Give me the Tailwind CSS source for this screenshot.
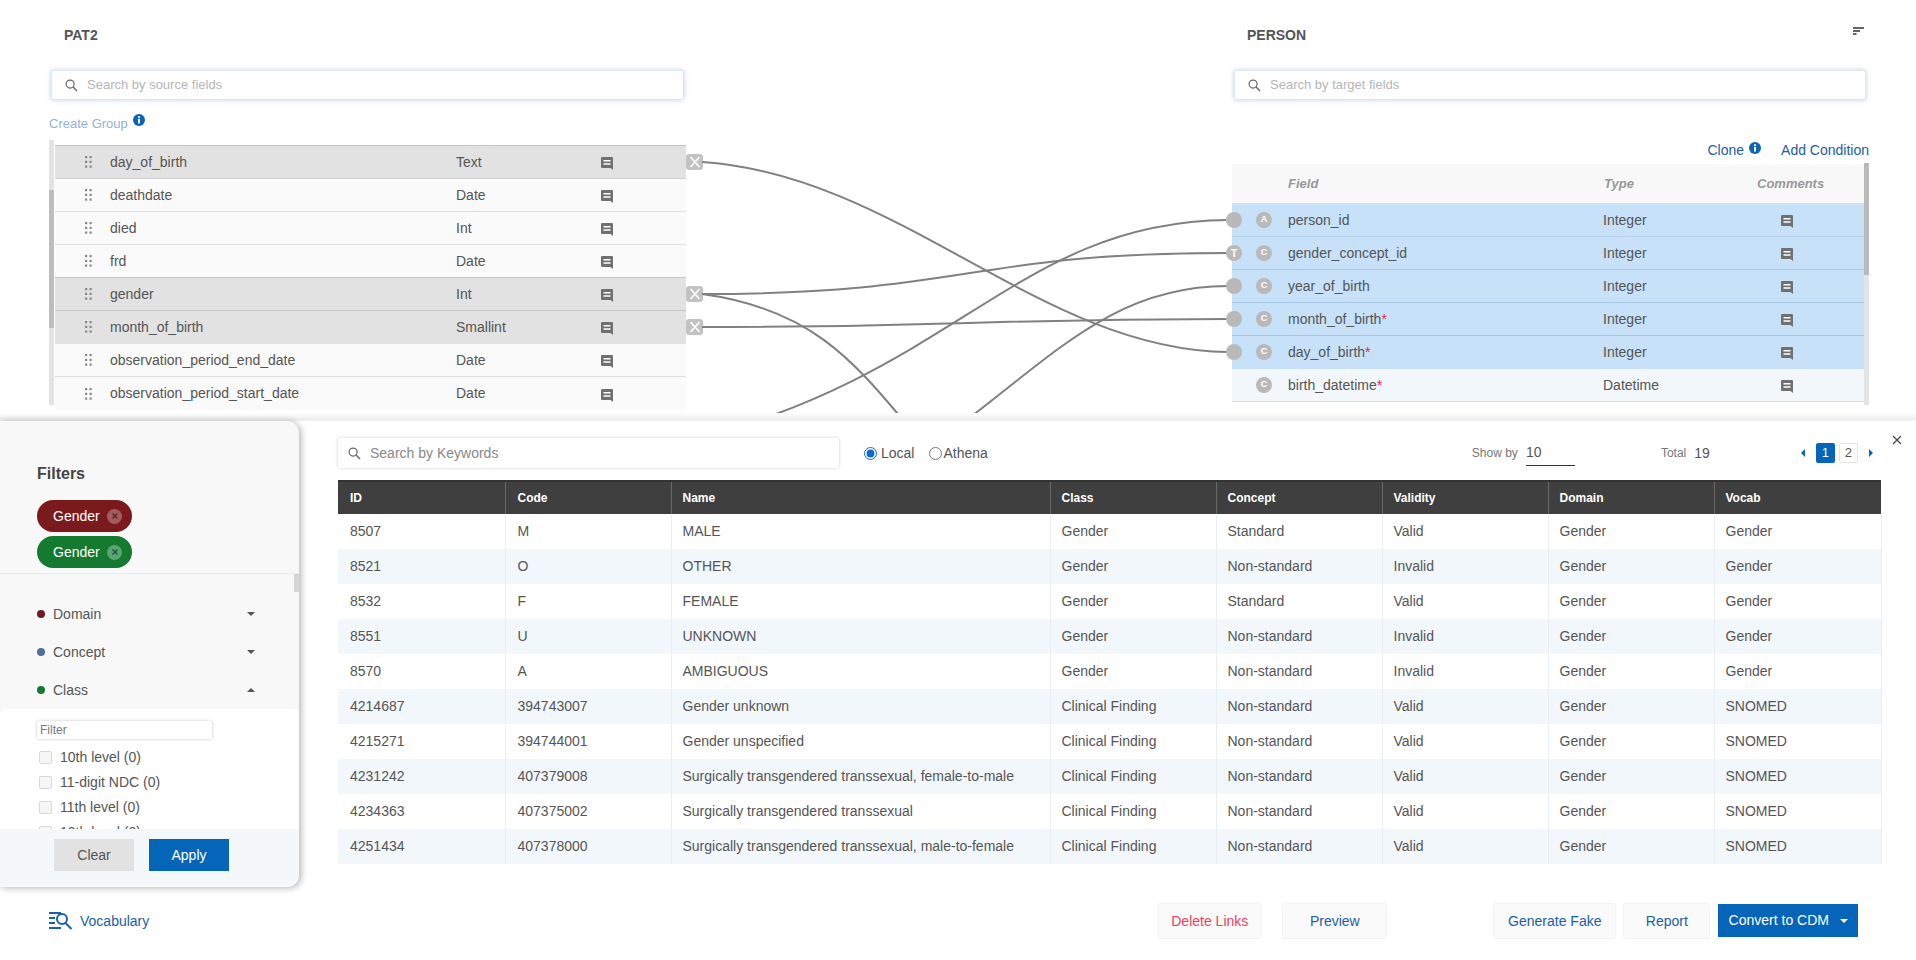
<!DOCTYPE html>
<html lang="en">
<head>
  <meta charset="UTF-8">
  <title>Mapping</title>
  <script src="https://cdn.jsdelivr.net/npm/@tailwindcss/browser@4"></script>
</head>
<body class="bg-white font-['Liberation_Sans',Arial,sans-serif] text-[14px] text-[#555]">
  <svg class="hidden">
    <symbol id="comment" viewBox="0 0 12 13"><path d="M1 0h10a1 1 0 0 1 1 1V13l-2.500-2H1a1 1 0 0 1-1-1V1a1 1 0 0 1 1-1z" fill="#707070"/><path d="M2.500 3.700h7M2.500 7h7" stroke="#fff" stroke-width="1.400"/></symbol>
    <symbol id="drag" viewBox="0 0 7 14"><g fill="#888"><rect x="0" y="1" width="2.200" height="2.200"/><rect x="4.500" y="1" width="2.200" height="2.200"/><rect x="0" y="5.800" width="2.200" height="2.200"/><rect x="4.500" y="5.800" width="2.200" height="2.200"/><rect x="0" y="10.500" width="2.200" height="2.200"/><rect x="4.500" y="10.500" width="2.200" height="2.200"/></g></symbol>
    <symbol id="search" viewBox="0 0 14 14"><circle cx="5.500" cy="5.500" r="4.300" fill="none" stroke="#666" stroke-width="1.300"/><path d="M8.700 8.700L13 13" stroke="#666" stroke-width="1.500"/></symbol>
    <symbol id="info" viewBox="0 0 12 12"><circle cx="6" cy="6" r="6" fill="#0b64b4"/><rect x="5" y="5" width="2" height="4.500" fill="#fff"/><rect x="5" y="2.300" width="2" height="1.800" fill="#fff"/></symbol>
    <symbol id="cross" viewBox="0 0 12 12"><path d="M1.500 1l9 10M10.500 1l-9 10" stroke="#fff" stroke-width="1.600"/></symbol>
    <symbol id="chipx" viewBox="0 0 8 8"><path d="M1.500 1.500l5 5M6.500 1.500l-5 5" stroke="#000" stroke-opacity="0.55" stroke-width="1.300"/></symbol>
  </svg>

  <div class="w-[1916px] h-[960px] overflow-hidden flex flex-col">
    <!-- Mapping area -->
    <section class="relative h-[420px] overflow-hidden flex justify-between">
      <div class="w-[703px] pl-[49px] shrink-0">
        <h2 class="pl-[15px] pt-[27px] h-[70px] text-[14px] font-bold text-[#555] leading-[16px]">PAT2</h2>
        <div class="ml-[2px] w-[633px] h-[30px] flex items-center gap-[9px] pl-[13px] bg-white rounded-[2px] border border-[#dfe8ef] shadow-[0_0_5px_rgba(110,150,190,0.45)]">
          <svg class="w-[13px] h-[13px]"><use href="#search"/></svg>
          <span class="text-[13px] text-[#b5b5b5]">Search by source fields</span>
        </div>
        <div class="h-[45px] pt-[15px] flex items-start text-[13px] leading-[18px] text-[#8fb3d1]">Create Group<svg class="w-[12px] h-[12px] ml-[5px] mt-[-1px]"><use href="#info"/></svg></div>
        <div class="relative">
          <div class="absolute left-0 top-[-5px] w-[5px] h-[265px] bg-[#e3e3e3]"><div class="mt-[50px] h-[138px] bg-[#bdbdbd]"></div></div>
          <div class="ml-[6px] w-[631px] border-t border-[#c4c4c4]">
            <div class="relative h-[33px] pl-[30px] flex items-center bg-[#e2e2e2] border-b border-[#d2d2d2]"><svg class="w-[7px] h-[14px] mr-[18px]"><use href="#drag"/></svg><span class="w-[346px]">day_of_birth</span><span class="w-[145px]">Text</span><svg class="w-[12px] h-[13px] mt-[3px]"><use href="#comment"/></svg><span class="absolute right-[-17px] top-[8px] w-[17px] h-[16px] rounded-[3px] bg-[#c2c2c2] flex items-center justify-center"><svg class="w-[12px] h-[12px]"><use href="#cross"/></svg></span></div>
            <div class="h-[33px] pl-[30px] flex items-center bg-[#fafafa] border-b border-[#dedede]"><svg class="w-[7px] h-[14px] mr-[18px]"><use href="#drag"/></svg><span class="w-[346px]">deathdate</span><span class="w-[145px]">Date</span><svg class="w-[12px] h-[13px] mt-[3px]"><use href="#comment"/></svg></div>
            <div class="h-[33px] pl-[30px] flex items-center bg-[#fafafa] border-b border-[#dedede]"><svg class="w-[7px] h-[14px] mr-[18px]"><use href="#drag"/></svg><span class="w-[346px]">died</span><span class="w-[145px]">Int</span><svg class="w-[12px] h-[13px] mt-[3px]"><use href="#comment"/></svg></div>
            <div class="h-[33px] pl-[30px] flex items-center bg-[#fafafa] border-b border-[#c4c4c4]"><svg class="w-[7px] h-[14px] mr-[18px]"><use href="#drag"/></svg><span class="w-[346px]">frd</span><span class="w-[145px]">Date</span><svg class="w-[12px] h-[13px] mt-[3px]"><use href="#comment"/></svg></div>
            <div class="relative h-[33px] pl-[30px] flex items-center bg-[#e2e2e2] border-b border-[#c8c8c8]"><svg class="w-[7px] h-[14px] mr-[18px]"><use href="#drag"/></svg><span class="w-[346px]">gender</span><span class="w-[145px]">Int</span><svg class="w-[12px] h-[13px] mt-[3px]"><use href="#comment"/></svg><span class="absolute right-[-17px] top-[8px] w-[17px] h-[16px] rounded-[3px] bg-[#c2c2c2] flex items-center justify-center"><svg class="w-[12px] h-[12px]"><use href="#cross"/></svg></span></div>
            <div class="relative h-[33px] pl-[30px] flex items-center bg-[#e2e2e2] border-b border-[#e2e2e2]"><svg class="w-[7px] h-[14px] mr-[18px]"><use href="#drag"/></svg><span class="w-[346px]">month_of_birth</span><span class="w-[145px]">Smallint</span><svg class="w-[12px] h-[13px] mt-[3px]"><use href="#comment"/></svg><span class="absolute right-[-17px] top-[8px] w-[17px] h-[16px] rounded-[3px] bg-[#c2c2c2] flex items-center justify-center"><svg class="w-[12px] h-[12px]"><use href="#cross"/></svg></span></div>
            <div class="h-[33px] pl-[30px] flex items-center bg-[#fafafa] border-b border-[#dedede]"><svg class="w-[7px] h-[14px] mr-[18px]"><use href="#drag"/></svg><span class="w-[346px]">observation_period_end_date</span><span class="w-[145px]">Date</span><svg class="w-[12px] h-[13px] mt-[3px]"><use href="#comment"/></svg></div>
            <div class="h-[33px] pl-[30px] flex items-center bg-[#fafafa]"><svg class="w-[7px] h-[14px] mr-[18px]"><use href="#drag"/></svg><span class="w-[346px]">observation_period_start_date</span><span class="w-[145px]">Date</span><svg class="w-[12px] h-[13px] mt-[3px]"><use href="#comment"/></svg></div>
          </div>
        </div>
      </div>

      <div class="w-[684px] pr-[47px] shrink-0">
        <div class="h-[70px] pl-[15px] pt-[27px] pr-[5px] flex justify-between items-start">
          <h2 class="text-[14px] font-bold text-[#555] leading-[16px]">PERSON</h2>
          <svg class="w-[11px] h-[8px]" viewBox="0 0 11 8"><path d="M0 1h11M0 4h7M0 7h3.500" stroke="#333" stroke-width="1.600"/></svg>
        </div>
        <div class="ml-[2px] w-[632px] h-[30px] flex items-center gap-[9px] pl-[13px] bg-white rounded-[2px] border border-[#dfe8ef] shadow-[0_0_5px_rgba(110,150,190,0.45)]">
          <svg class="w-[13px] h-[13px]"><use href="#search"/></svg>
          <span class="text-[13px] text-[#b5b5b5]">Search by target fields</span>
        </div>
        <div class="h-[64px] flex items-end justify-end pb-[5px] gap-[20px] text-[14px] leading-[18px] text-[#1a60a8]">
          <span class="flex items-start">Clone<svg class="w-[12px] h-[12px] ml-[5px] mt-[1px]"><use href="#info"/></svg></span>
          <span>Add Condition</span>
        </div>
        <div class="relative w-[637px]">
          <div class="absolute right-0 top-[-1px] w-[5px] h-[242px] bg-[#e3e3e3]"><div class="h-[112px] bg-[#b9b9b9]"></div></div>
          <div class="w-[632px] h-[40px] pl-[56px] flex items-center bg-[#f8f8f8] border-b border-[#dcdcdc] text-[13px] italic font-bold text-[#999]"><span class="w-[316px]">Field</span><span class="w-[153px]">Type</span><span>Comments</span></div>
          <div class="w-[632px] h-[33px] flex items-center bg-[#c6e1f8] border-b border-[#b7d2ea]"><span class="w-[16px] h-[16px] ml-[24px] mr-[16px] rounded-full bg-[#b9b9b9] text-white text-[9px] font-bold flex items-center justify-center">A</span><span class="w-[315px]">person_id</span><span class="w-[178px]">Integer</span><svg class="w-[12px] h-[13px] mt-[3px]"><use href="#comment"/></svg></div>
          <div class="w-[632px] h-[33px] flex items-center bg-[#c6e1f8] border-b border-[#a9c8e3]"><span class="w-[16px] h-[16px] ml-[24px] mr-[16px] rounded-full bg-[#b9b9b9] text-white text-[9px] font-bold flex items-center justify-center">C</span><span class="w-[315px]">gender_concept_id</span><span class="w-[178px]">Integer</span><svg class="w-[12px] h-[13px] mt-[3px]"><use href="#comment"/></svg></div>
          <div class="w-[632px] h-[33px] flex items-center bg-[#c6e1f8] border-b border-[#a9c8e3]"><span class="w-[16px] h-[16px] ml-[24px] mr-[16px] rounded-full bg-[#b9b9b9] text-white text-[9px] font-bold flex items-center justify-center">C</span><span class="w-[315px]">year_of_birth</span><span class="w-[178px]">Integer</span><svg class="w-[12px] h-[13px] mt-[3px]"><use href="#comment"/></svg></div>
          <div class="w-[632px] h-[33px] flex items-center bg-[#c6e1f8] border-b border-[#a9c8e3]"><span class="w-[16px] h-[16px] ml-[24px] mr-[16px] rounded-full bg-[#b9b9b9] text-white text-[9px] font-bold flex items-center justify-center">C</span><span class="w-[315px]">month_of_birth<span class="text-[#e0245e]">*</span></span><span class="w-[178px]">Integer</span><svg class="w-[12px] h-[13px] mt-[3px]"><use href="#comment"/></svg></div>
          <div class="w-[632px] h-[33px] flex items-center bg-[#c6e1f8] border-b border-[#c6e1f8]"><span class="w-[16px] h-[16px] ml-[24px] mr-[16px] rounded-full bg-[#b9b9b9] text-white text-[9px] font-bold flex items-center justify-center">C</span><span class="w-[315px]">day_of_birth<span class="text-[#e0245e]">*</span></span><span class="w-[178px]">Integer</span><svg class="w-[12px] h-[13px] mt-[3px]"><use href="#comment"/></svg></div>
          <div class="w-[632px] h-[33px] flex items-center bg-[#f2f7fb] border-b border-[#d5dde3]"><span class="w-[16px] h-[16px] ml-[24px] mr-[16px] rounded-full bg-[#b9b9b9] text-white text-[9px] font-bold flex items-center justify-center">C</span><span class="w-[315px]">birth_datetime<span class="text-[#e0245e]">*</span></span><span class="w-[178px]">Datetime</span><svg class="w-[12px] h-[13px] mt-[3px]"><use href="#comment"/></svg></div>
        </div>
      </div>

      <!-- Links between source and target fields -->
      <svg class="absolute left-0 top-0 pointer-events-none" width="1916" height="415" fill="none" stroke="#808080" stroke-width="2">
        <path d="M702 162C900 175 1040 350 1228 352"/>
        <path d="M702 294C968 294 968 253 1228 253"/>
        <path d="M702 294C820 310 860 370 920 440"/>
        <path d="M702 327C968 327 968 319 1228 319"/>
        <path d="M700 438C960 370 1020 222 1228 220"/>
        <path d="M940 440C1050 360 1110 286 1228 286"/>
      </svg>
      <div class="absolute left-[1226px] top-[212px] w-[16px] h-[16px] rounded-full bg-[#b9b9b9]"></div>
      <div class="absolute left-[1226px] top-[245px] w-[16px] h-[16px] rounded-full bg-[#b9b9b9] text-white text-[11px] font-bold flex items-center justify-center">T</div>
      <div class="absolute left-[1226px] top-[278px] w-[16px] h-[16px] rounded-full bg-[#b9b9b9]"></div>
      <div class="absolute left-[1226px] top-[311px] w-[16px] h-[16px] rounded-full bg-[#b9b9b9]"></div>
      <div class="absolute left-[1226px] top-[344px] w-[16px] h-[16px] rounded-full bg-[#b9b9b9]"></div>
      <div class="absolute left-0 bottom-0 w-full h-[7px] bg-gradient-to-b from-white to-[#ececec]"></div>
    </section>

    <!-- Vocabulary drawer -->
    <section class="h-[470px] flex bg-white border-t border-[#f0f0f0]">
      <aside class="w-[299px] h-[466px] shrink-0 flex flex-col bg-[#f8f8f9] rounded-r-[12px] shadow-[2px_1px_7px_rgba(0,0,0,0.3)] overflow-hidden relative z-10">
        <div class="h-[153px] pl-[37px] pt-[44px] border-b border-[#ececec] shrink-0">
          <h3 class="text-[16px] font-bold leading-[18px] text-[#444] mb-[17px]">Filters</h3>
          <div class="w-[95px] h-[32px] mb-[4px] rounded-full bg-[#7b1a1c] text-white flex items-center justify-between pl-[16px] pr-[10px]">Gender<span class="w-[15px] h-[15px] rounded-full bg-[#a55a5c] flex items-center justify-center"><svg class="w-[8px] h-[8px]"><use href="#chipx"/></svg></span></div>
          <div class="w-[95px] h-[32px] rounded-full bg-[#137a30] text-white flex items-center justify-between pl-[16px] pr-[10px]">Gender<span class="w-[15px] h-[15px] rounded-full bg-[#5aa673] flex items-center justify-center"><svg class="w-[8px] h-[8px]"><use href="#chipx"/></svg></span></div>
        </div>
        <div class="relative h-[135px] shrink-0 pl-[37px] pr-[44px] pt-[21px]">
          <div class="absolute right-0 top-0 w-[5px] h-[18px] bg-[#d5d5d5]"></div>
          <div class="h-[38px] flex items-center"><span class="w-[8px] h-[8px] rounded-full bg-[#701a24] mr-[8px]"></span><span>Domain</span><span class="ml-auto border-x-[4px] border-x-transparent border-t-[4px] border-t-[#555]"></span></div>
          <div class="h-[38px] flex items-center"><span class="w-[8px] h-[8px] rounded-full bg-[#4f6f9a] mr-[8px]"></span><span>Concept</span><span class="ml-auto border-x-[4px] border-x-transparent border-t-[4px] border-t-[#555]"></span></div>
          <div class="h-[38px] flex items-center"><span class="w-[8px] h-[8px] rounded-full bg-[#137a30] mr-[8px]"></span><span>Class</span><span class="ml-auto border-x-[4px] border-x-transparent border-b-[4px] border-b-[#555]"></span></div>
        </div>
        <div class="h-[120px] shrink-0 overflow-hidden bg-white pl-[37px] pt-[12px] rounded-t-[6px]">
          <div class="w-[175px] h-[18px] pl-[3px] mb-[6px] flex items-center text-[12px] text-[#777] bg-white rounded-[2px] shadow-[0_0_3px_rgba(0,0,0,0.25)]">Filter</div>
          <div class="h-[25px] flex items-center"><span class="w-[13px] h-[13px] ml-[2px] mr-[8px] rounded-[2px] border border-[#d8d8d8] bg-[#f6f6f6]"></span>10th level (0)</div>
          <div class="h-[25px] flex items-center"><span class="w-[13px] h-[13px] ml-[2px] mr-[8px] rounded-[2px] border border-[#d8d8d8] bg-[#f6f6f6]"></span>11-digit NDC (0)</div>
          <div class="h-[25px] flex items-center"><span class="w-[13px] h-[13px] ml-[2px] mr-[8px] rounded-[2px] border border-[#d8d8d8] bg-[#f6f6f6]"></span>11th level (0)</div>
          <div class="h-[25px] flex items-center"><span class="w-[13px] h-[13px] ml-[2px] mr-[8px] rounded-[2px] border border-[#d8d8d8] bg-[#f6f6f6]"></span>12th level (0)</div>
        </div>
        <div class="flex-1 pl-[54px] pt-[10px] flex gap-[15px] items-start bg-[#f4f8fb]">
          <button class="w-[80px] h-[32px] bg-[#e2e2e2] text-[#555]">Clear</button>
          <button class="w-[80px] h-[32px] bg-[#0565b8] text-white">Apply</button>
        </div>
      </aside>

      <div class="relative flex-1 pl-[39px] pt-[17px]">
        <div class="flex items-start h-[42px]">
          <div class="w-[501px] h-[30px] flex items-center gap-[9px] pl-[10px] bg-white shadow-[0_0_3px_rgba(0,0,0,0.22)] rounded-[2px]">
            <svg class="w-[13px] h-[13px]"><use href="#search"/></svg>
            <span class="text-[14px] text-[#888]">Search by Keywords</span>
          </div>
          <label class="ml-[25px] mt-[5px] flex items-center"><input type="radio" name="src" checked class="w-[13px] h-[13px] mr-[4px] accent-[#0b6bd6]">Local</label>
          <label class="ml-[15px] mt-[5px] flex items-center"><input type="radio" name="src" class="w-[13px] h-[13px] mr-[1px]">Athena</label>
          <div class="ml-[484px] mt-[3px] flex items-center h-[24px] text-[12px] text-[#777]">Show by<span class="ml-[8px] w-[49px] h-[26px] leading-[24px] border-b border-[#333] text-[14px] text-[#555]">10</span></div>
          <div class="ml-[86px] mt-[3px] flex items-center h-[24px] text-[12px] text-[#777]">Total<span class="ml-[8px] text-[14px] text-[#555]">19</span></div>
          <div class="ml-[91px] mt-[5px] flex items-center">
            <span class="border-y-[4px] border-y-transparent border-r-[4px] border-r-[#0565b8] mr-[11px]"></span>
            <span class="w-[19px] h-[20px] rounded-[2px] bg-[#0565b8] text-white text-[13px] flex items-center justify-center mr-[4px]">1</span>
            <span class="w-[19px] h-[20px] rounded-[2px] border border-[#e4e4e4] text-[13px] flex items-center justify-center mr-[11px]">2</span>
            <span class="border-y-[4px] border-y-transparent border-l-[4px] border-l-[#0565b8]"></span>
          </div>
          <svg class="ml-[19px] mt-[-3px] w-[10px] h-[10px]" viewBox="0 0 10 10"><path d="M1 1l8 8M9 1l-8 8" stroke="#444" stroke-width="1.200"/></svg>
        </div>

        <table class="table-fixed w-[1543px] border-collapse">
          <colgroup><col class="w-[167px]"><col class="w-[166px]"><col class="w-[379px]"><col class="w-[166px]"><col class="w-[166px]"><col class="w-[166px]"><col class="w-[166px]"><col class="w-[167px]"></colgroup>
          <thead>
            <tr class="h-[33px] bg-[#3f3f3f] text-white text-[12px] font-bold text-left border-t-2 border-[#333]">
              <th class="pl-[12px] pr-[11px] border-r border-[#6a6a6a]">ID</th><th class="pl-[12px] pr-[11px] border-r border-[#6a6a6a]">Code</th><th class="px-[11px] border-r border-[#6a6a6a]">Name</th><th class="px-[11px] border-r border-[#6a6a6a]">Class</th><th class="px-[11px] border-r border-[#6a6a6a]">Concept</th><th class="px-[11px] border-r border-[#6a6a6a]">Validity</th><th class="px-[11px] border-r border-[#6a6a6a]">Domain</th><th class="px-[11px]">Vocab</th>
            </tr>
          </thead>
          <tbody class="[&>tr]:h-[35px] [&_td]:px-[11px] [&_td:nth-child(-n+2)]:pl-[12px] [&_td]:border-r [&_td]:border-[#e9eef2] [&>tr:nth-child(even)]:bg-[#f1f7fb]">
            <tr><td>8507</td><td>M</td><td>MALE</td><td>Gender</td><td>Standard</td><td>Valid</td><td>Gender</td><td>Gender</td></tr>
            <tr><td>8521</td><td>O</td><td>OTHER</td><td>Gender</td><td>Non-standard</td><td>Invalid</td><td>Gender</td><td>Gender</td></tr>
            <tr><td>8532</td><td>F</td><td>FEMALE</td><td>Gender</td><td>Standard</td><td>Valid</td><td>Gender</td><td>Gender</td></tr>
            <tr><td>8551</td><td>U</td><td>UNKNOWN</td><td>Gender</td><td>Non-standard</td><td>Invalid</td><td>Gender</td><td>Gender</td></tr>
            <tr><td>8570</td><td>A</td><td>AMBIGUOUS</td><td>Gender</td><td>Non-standard</td><td>Invalid</td><td>Gender</td><td>Gender</td></tr>
            <tr><td>4214687</td><td>394743007</td><td>Gender unknown</td><td>Clinical Finding</td><td>Non-standard</td><td>Valid</td><td>Gender</td><td>SNOMED</td></tr>
            <tr><td>4215271</td><td>394744001</td><td>Gender unspecified</td><td>Clinical Finding</td><td>Non-standard</td><td>Valid</td><td>Gender</td><td>SNOMED</td></tr>
            <tr><td>4231242</td><td>407379008</td><td>Surgically transgendered transsexual, female-to-male</td><td>Clinical Finding</td><td>Non-standard</td><td>Valid</td><td>Gender</td><td>SNOMED</td></tr>
            <tr><td>4234363</td><td>407375002</td><td>Surgically transgendered transsexual</td><td>Clinical Finding</td><td>Non-standard</td><td>Valid</td><td>Gender</td><td>SNOMED</td></tr>
            <tr><td>4251434</td><td>407378000</td><td>Surgically transgendered transsexual, male-to-female</td><td>Clinical Finding</td><td>Non-standard</td><td>Valid</td><td>Gender</td><td>SNOMED</td></tr>
          </tbody>
        </table>
      </div>
    </section>

    <!-- Footer actions -->
    <footer class="flex-1 flex items-start pt-[14px] pl-[49px]">
      <div class="h-[34px] flex items-center text-[#1a60a8]">
        <svg class="w-[24px] h-[20px] mr-[7px]" viewBox="0 0 24 20" fill="none" stroke="#1a60a8" stroke-width="2"><path d="M0 2h12M0 7h6M0 12h6M0 17h12"/><circle cx="13" cy="8" r="5"/><path d="M16.500 12l6 6"/></svg>
        Vocabulary
      </div>
      <button class="ml-[1010px] w-[101px] h-[34px] bg-[#fafafa] text-[#ef4060] shadow-[0_0_2px_rgba(0,0,0,0.15)]">Delete Links</button>
      <button class="ml-[23px] w-[103px] h-[34px] bg-[#fafafa] text-[#1a60a8] shadow-[0_0_2px_rgba(0,0,0,0.15)]">Preview</button>
      <button class="ml-[108px] w-[121px] h-[34px] bg-[#fafafa] text-[#1a60a8] shadow-[0_0_2px_rgba(0,0,0,0.15)]">Generate Fake</button>
      <button class="ml-[9px] w-[85px] h-[34px] bg-[#fafafa] text-[#1a60a8] shadow-[0_0_2px_rgba(0,0,0,0.15)]">Report</button>
      <button class="ml-[9px] w-[140px] h-[33px] bg-[#0565b8] text-white flex items-center justify-center gap-[11px]">Convert to CDM<span class="border-x-[4px] border-x-transparent border-t-[4px] border-t-white"></span></button>
    </footer>
  </div>
</body>
</html>
